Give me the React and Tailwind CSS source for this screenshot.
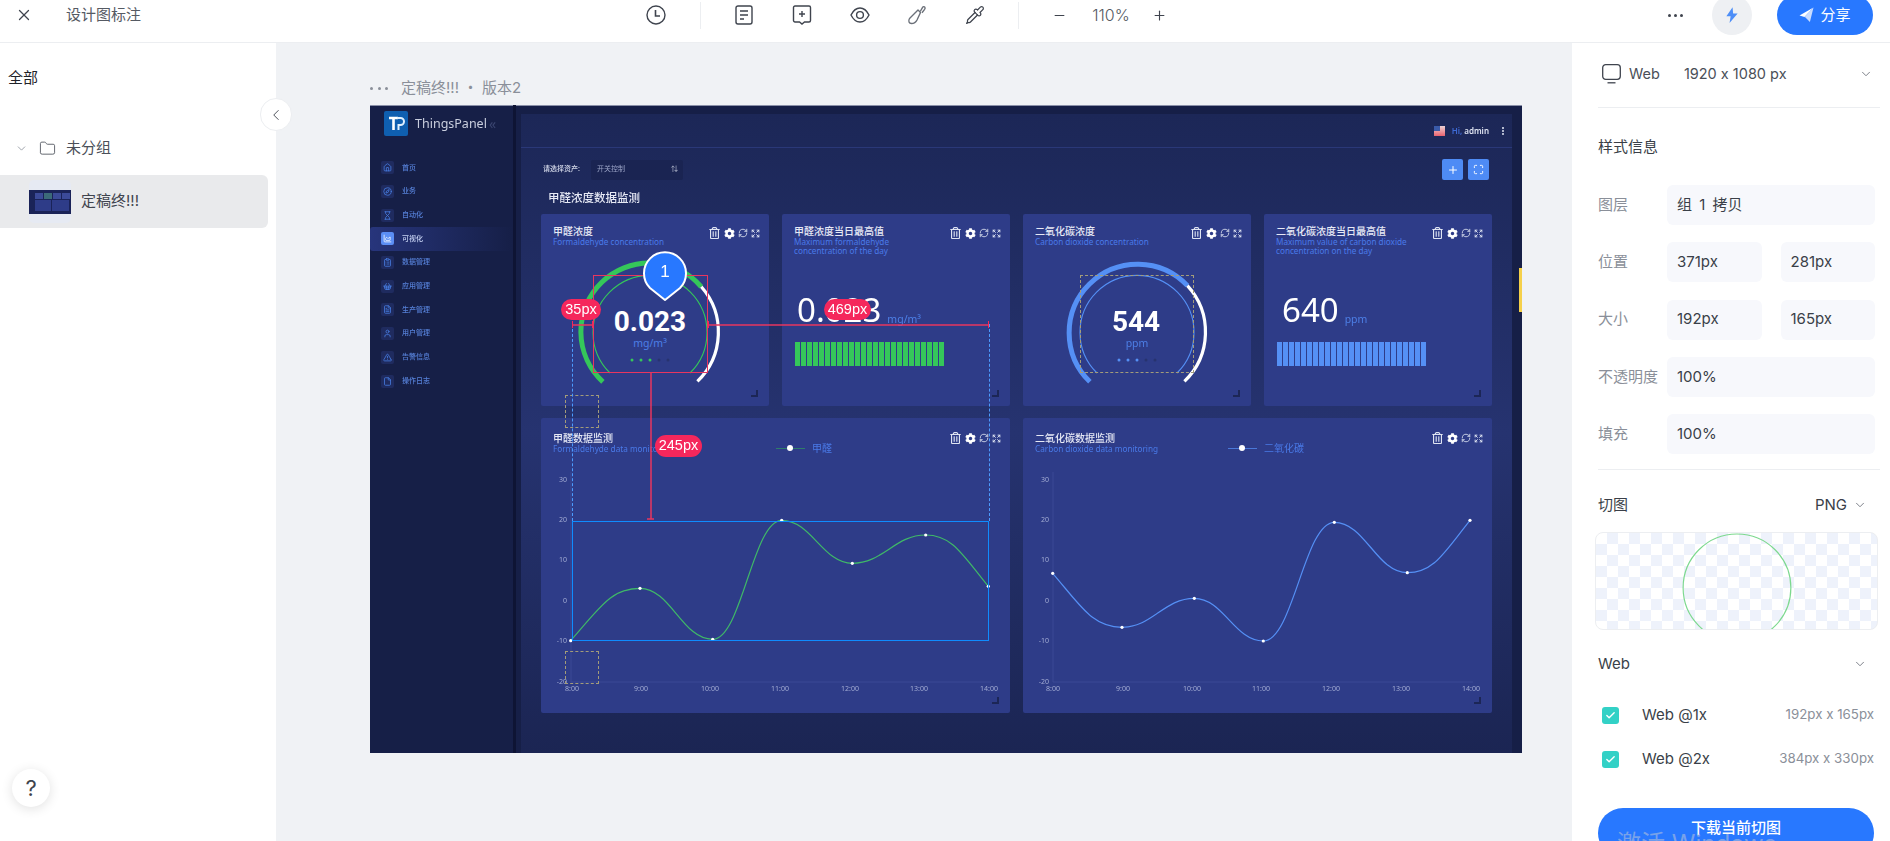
import React from "react";
import {
	ChevronDown,
	ChevronLeft,
	Compass,
	Expand,
	FileText,
	File,
	Folder,
	Hourglass,
	House,
	ClipboardList,
	Minus,
	Pipette,
	Plus,
	Maximize,
	MoreVertical,
	RefreshCw,
	ShoppingBasket,
	TriangleAlert,
	User,
	X,
	ChartArea,
	Check,
} from "lucide-react";
import { FaCog, FaRegTrashAlt } from "react-icons/fa";

const menu = [
	["首页", House],
	["业务", Compass],
	["自动化", Hourglass],
	["可视化", ChartArea],
	["数据管理", ClipboardList],
	["应用管理", ShoppingBasket],
	["生产管理", FileText],
	["用户管理", User],
	["告警信息", TriangleAlert],
	["操作日志", File],
];

const hours = ["8:00", "9:00", "10:00", "11:00", "12:00", "13:00", "14:00"];
const yTicks = [
	["30", 479],
	["20", 519],
	["10", 559],
	["0", 600],
	["-10", 640],
	["-20", 681],
];

// monotone-ish spline: flat at peaks, steeper at both ends
const smoothPath = (pts) => {
	const sec = pts.slice(1).map((p, i) => (p[1] - pts[i][1]) / (p[0] - pts[i][0]));
	const m = pts.map((_, i) => {
		if (i === 0) return sec[0] * 1.5;
		if (i === pts.length - 1) return sec[i - 1] * 1.5;
		if (sec[i - 1] * sec[i] <= 0) return 0;
		return (2 * sec[i - 1] * sec[i]) / (sec[i - 1] + sec[i]);
	});
	let d = `M${pts[0][0]} ${pts[0][1]}`;
	for (let i = 1; i < pts.length; i++) {
		const dx = (pts[i][0] - pts[i - 1][0]) * 0.42;
		d += ` C${pts[i - 1][0] + dx} ${pts[i - 1][1] + m[i - 1] * dx} ${pts[i][0] - dx} ${pts[i][1] - m[i] * dx} ${pts[i][0]} ${pts[i][1]}`;
	}
	return d;
};

const CardTools = () => (
	<div className="flex items-center gap-[3px] text-[#dfe4f2]">
		<FaRegTrashAlt className="h-[12px] w-[11px]" />
		<FaCog className="ml-[1px] h-[11px] w-[11px] text-white" />
		<RefreshCw className="h-[10px] w-[10px]" strokeWidth={2} />
		<Expand className="h-[9px] w-[9px]" strokeWidth={2.5} />
	</div>
);

const Corner = () => (
	<div className="absolute bottom-[9px] right-[11px] h-[7px] w-[7px] border-b-2 border-r-2 border-[#1c2656]" />
);

const CardHead = ({ title, sub }) => (
	<div className="flex justify-between pl-[12px] pr-[9px] pt-[11px]">
		<div>
			<div className="text-[10px] font-medium leading-[12px] text-[#e6e9f5]">{title}</div>
			<div className="w-[140px] whitespace-pre-line text-[8.2px] leading-[9px] text-[#4a7ae8]">{sub}</div>
		</div>
		<div className="pt-[2px]">
			<CardTools />
		</div>
	</div>
);

const Gauge = ({ cx, color, whiteFrom, value, unit, valueX }) => {
	const dots = [0, 1, 2, 3, 4];
	return (
		<svg className="block h-[135px] w-[150px]" viewBox={`${cx - 75} 255 150 135`} fill="none">
			<path d={`M${cx - 47.1} 381.8 A68.5 68.5 0 1 1 ${whiteFrom[0]} ${whiteFrom[1]}`} stroke={color} strokeWidth="5" />
			<path d={`M${whiteFrom[0]} ${whiteFrom[1]} A68.5 68.5 0 0 1 ${cx + 47.4} 381.4`} stroke="#fff" strokeWidth="3.2" />
			<path d={`M${cx - 40} 373 A57 57 0 1 1 ${cx + 40} 373`} stroke={color} strokeWidth="1.1" />
			<text x={valueX} y="331" textAnchor="middle" fill="#fff" fontSize="28" fontWeight="700" fontFamily="Roboto, sans-serif">
				{value}
			</text>
			<text x={cx} y="347" textAnchor="middle" fill="#4d7fe6" fontSize="10.5">
				{unit}
			</text>
			{dots.map((i) => (
				<circle key={i} cx={cx - 18 + i * 9} cy="360" r="1.5" fill={i < 3 ? color : "#27336f"} />
			))}
		</svg>
	);
};

const MaxCard = ({ title, sub, value, unit, color, valueClass }) => (
	<div className="relative h-[192px] rounded-[2px] bg-[#2e3c88]">
		<CardHead title={title} sub={sub} />
		<div className={valueClass}>
			<span className="text-[33px] leading-[34px] text-white">{value}</span>
			<span className="mb-[1px] ml-[6px] text-[10.5px] leading-[14px] text-[#4d7fe6]">{unit}</span>
		</div>
		<div className="ml-[13px] mt-[15px] flex h-[24px] w-[149px] gap-[1.5px]">
			{Array.from({ length: 25 }).map((_, i) => (
				<div key={i} className="flex-1" style={{ background: color }} />
			))}
		</div>
		<Corner />
	</div>
);

const ChartCard = ({ title, sub, legend, legendWidth, color, lineColor, axisX, labels, points }) => (
	<div className="relative h-[295px] rounded-[2px] bg-[#2e3c88]">
		<div className="flex h-[47px] pl-[12px] pr-[9px] pt-[14px]">
			<div style={{ width: legendWidth }}>
				<div className="text-[10px] font-medium leading-[12px] text-[#e6e9f5]">{title}</div>
				<div className="text-[8.2px] leading-[10px] text-[#4a7ae8]">{sub}</div>
			</div>
			<div className="mt-[10px] flex h-[12px] items-center">
				<div className="relative h-[1px] w-[29px]" style={{ background: lineColor }}>
					<div className="absolute left-[11px] top-[-3px] h-[6px] w-[6px] rounded-full bg-white" />
				</div>
				<span className="ml-[7px] text-[10px] leading-[12px] text-[#4a7ae8]">{legend}</span>
			</div>
			<div className="ml-auto">
				<CardTools />
			</div>
		</div>
		<svg className="block h-[235px] w-full" viewBox={`${axisX - 30} 465 469 235`} fill="none">
			<path d={`M${axisX} 472 V682 H${axisX + 420}`} stroke="#3a4995" strokeWidth="1" />
			{yTicks.map(([t, y]) => (
				<text key={t} x={axisX - 4} y={y + 3} textAnchor="end" fill="#a3acd4" fontSize="7">
					{t}
				</text>
			))}
			{hours.map((h, i) => (
				<text key={h} x={labels[i]} y="691" textAnchor="middle" fill="#a3acd4" fontSize="7">
					{h}
				</text>
			))}
			<path d={smoothPath(points)} stroke={color} strokeWidth="1.2" />
			{points.map((p) => (
				<circle key={p[0]} cx={p[0]} cy={p[1]} r="1.6" fill="#fff" />
			))}
		</svg>
		<Corner />
	</div>
);

const Artboard = () => (
	<div className="relative h-[648px] w-[1152px] shrink-0 bg-[#161f47] shadow-[inset_0_1px_0_#8a90a8] [font-family:'Noto_Sans','Noto_Sans_CJK_SC',sans-serif]">
		<div className="flex h-full blur-[0.4px]">
			<aside className="w-[143px] shrink-0">
				<div className="flex items-center pl-[14px] pt-[6px]">
					<svg className="h-[25px] w-[24px] shrink-0" viewBox="0 0 24 25" fill="none">
						<rect width="24" height="25" rx="2" fill="#0f5fb0" />
						<path d="M5 7h9M9.5 7v12" stroke="#fff" strokeWidth="2.6" />
						<path d="M13 7h3.5a3.5 3.5 0 0 1 0 7H14.5v5" stroke="#dff0ff" strokeWidth="2" />
					</svg>
					<span className="ml-[7px] text-[12.5px] leading-[25px] text-[#c9cede]">ThingsPanel</span>
					<span className="ml-[2px] text-[14px] leading-[25px] text-[#3a4570]">«</span>
				</div>
				<div className="mt-[20px] flex flex-col">
					{menu.map(([label, Icon]) => {
						const active = label === "可视化";
						return (
							<div
								key={label}
								className={
									active
										? "flex h-[23.7px] items-center rounded-l-[3px] bg-linear-to-r from-[#27357c] to-[#161f47] pl-[11px]"
										: "flex h-[23.7px] items-center pl-[11px]"
								}
							>
								<div
									className={
										active
											? "flex h-[13px] w-[13px] items-center justify-center rounded-[2px] bg-[#5b8ef5] text-white"
											: "flex h-[13px] w-[13px] items-center justify-center rounded-[2px] bg-[#1f2b5f] text-[#4a82e8]"
									}
								>
									<Icon className="h-[9px] w-[9px]" strokeWidth={2} />
								</div>
								<span className={active ? "ml-[8px] text-[7px] font-medium text-[#c6d2f2]" : "ml-[8px] text-[7px] font-medium text-[#5680d8]"}>
									{label}
								</span>
							</div>
						);
					})}
				</div>
			</aside>
			<div className="w-[3px] shrink-0 bg-[#0e1434]" />
			<main className="ml-[5px] mt-[9px] h-[639px] w-[991px] shrink-0 bg-linear-to-b from-[#1c2757] via-[#263370] to-[#1b2553]">
				<header className="flex h-[34px] items-center justify-end border-b border-[#2a3878] pr-[4px]">
					<div className="relative h-[10px] w-[11px] bg-linear-to-b from-[#e8d0d4] to-[#e86070]">
						<div className="absolute left-0 top-0 h-[5px] w-[6px] bg-[#3a5aa8]" />
					</div>
					<span className="ml-[7px] text-[8px] font-semibold text-[#3f6bd6]">Hi,</span>
					<span className="ml-[2px] text-[8px] font-semibold text-[#dfe4f2]">admin</span>
					<MoreVertical className="ml-[9px] h-[10px] w-[10px] text-[#dfe4f2]" strokeWidth={3} />
				</header>
				<div className="pl-[20px] pr-[20px]">
					<div className="mt-[11px] flex h-[21px] items-center">
						<span className="ml-[2px] text-[7px] font-medium text-[#d5daea]">请选择资产:</span>
						<div className="ml-[11px] flex h-[20px] w-[92px] items-center justify-between rounded-[2px] bg-[#1a2452] pl-[6px] pr-[5px] text-[7px] text-[#9aa3c6]">
							<span>开关控制</span>
							<span className="text-[#c9cede]">⇅</span>
						</div>
						<div className="ml-auto mr-[3px] flex gap-[5px]">
							<div className="flex h-[21px] w-[21px] items-center justify-center rounded-[2px] bg-[#4e8bf5] text-white">
								<Plus className="h-[12px] w-[12px]" strokeWidth={2} />
							</div>
							<div className="flex h-[21px] w-[21px] items-center justify-center rounded-[2px] bg-[#4e8bf5] text-white">
								<Maximize className="h-[11px] w-[11px]" strokeWidth={2} />
							</div>
						</div>
					</div>
					<div className="ml-[7px] mt-[9px] h-[18px] text-[11.5px] font-medium leading-[18px] text-[#e6e9f5]">甲醛浓度数据监测</div>
					<div className="mt-[7px] grid grid-cols-4 gap-x-[13px]">
						<div className="relative h-[192px] rounded-[2px] bg-[#2e3c88]">
							<CardHead title="甲醛浓度" sub="Formaldehyde concentration" />
							<div className="absolute left-[34px] top-[41px]">
								<Gauge cx={650} color="#35c75a" whiteFrom={[701.3, 286.8]} value="0.023" unit="mg/m³" valueX={650} />
							</div>
							<Corner />
						</div>
						<MaxCard
							title="甲醛浓度当日最高值"
							sub={"Maximum formaldehyde\nconcentration of the day"}
							value="0.023"
							unit="mg/m³"
							color="#35c75a"
							valueClass="ml-[15px] mt-[38px] flex h-[34px] items-end"
						/>
						<div className="relative h-[192px] rounded-[2px] bg-[#2e3c88]">
							<CardHead title="二氧化碳浓度" sub="Carbon dioxide concentration" />
							<div className="absolute left-[39px] top-[41px]">
								<Gauge cx={1136} color="#5590f5" whiteFrom={[1186.4, 285.6]} value="544" unit="ppm" valueX={1135} />
							</div>
							<Corner />
						</div>
						<MaxCard
							title="二氧化碳浓度当日最高值"
							sub={"Maximum value of carbon dioxide\nconcentration on the day"}
							value="640"
							unit="ppm"
							color="#5590f5"
							valueClass="ml-[18px] mt-[38px] flex h-[34px] items-end"
						/>
					</div>
					<div className="mt-[12px] grid grid-cols-2 gap-x-[13px]">
						<ChartCard
							title="甲醛数据监测"
							sub="Formaldehyde data monitoring"
							legend="甲醛"
							legendWidth="223px"
							color="#3fb868"
							lineColor="#2f7d6a"
							axisX={571}
							labels={[572, 641, 710, 780, 850, 919, 989]}
							points={[[570.7, 640.7], [640, 588.3], [712.7, 639.3], [781.7, 520.3], [852.3, 563.3], [925.7, 535], [988.3, 586.3]]}
						/>
						<ChartCard
							title="二氧化碳数据监测"
							sub="Carbon dioxide data monitoring"
							legend="二氧化碳"
							legendWidth="193px"
							color="#5590f5"
							lineColor="#4a78d8"
							axisX={1053}
							labels={[1053, 1123, 1192, 1261, 1331, 1401, 1471]}
							points={[[1052.7, 573.3], [1122, 627.3], [1194.3, 598.3], [1263.3, 641], [1334.3, 522.3], [1407.3, 572.7], [1470, 520.3]]}
						/>
					</div>
				</div>
			</main>
		</div>

		{/* annotation layer on top of the design image */}
		<div className="absolute left-[1149px] top-[163px] h-[44px] w-[3px] bg-[#f5d04a]" />
		<div className="absolute left-[710px] top-[170px] h-[98px] w-[114px] border border-dashed border-[#a39c7a]" />
		<div className="absolute left-[195px] top-[290px] h-[33px] w-[34px] border border-dashed border-[#a39c7a]" />
		<div className="absolute left-[195px] top-[546px] h-[33px] w-[34px] border border-dashed border-[#a39c7a]" />
		<div className="absolute left-[202px] top-[219px] h-[197px] border-l border-dashed border-[#4c9cff]" />
		<div className="absolute left-[619px] top-[219px] h-[197px] border-l border-dashed border-[#4c9cff]" />
		<div className="absolute left-[202px] top-[416px] h-[120px] w-[417px] border-[1.5px] border-[#0f8cff]" />
		<div className="absolute left-[223px] top-[170px] h-[98px] w-[115px] border border-[#e8355f]" />
		<div className="absolute left-[202px] top-[216px] h-[7px] w-[21px] border-x border-[#f5275c]">
			<div className="mt-[3px] h-[2px] bg-[#e8355f]/75" />
		</div>
		<div className="absolute left-[338px] top-[216px] h-[7px] w-[281px] border-x border-[#f5275c]">
			<div className="mt-[3px] h-[2px] bg-[#e8355f]/75" />
		</div>
		<div className="absolute left-[280px] top-[268px] h-[146px] w-[2px] bg-[#e8355f]/75" />
		<div className="absolute left-[277px] top-[413px] h-[2px] w-[7px] bg-[#e8355f]/75" />
		<div className="absolute left-[191px] top-[194px] flex h-[21px] w-[40px] items-center justify-center rounded-full bg-[#f5275c] text-[14.5px] text-white [font-family:'Liberation_Sans',sans-serif]">
			35px
		</div>
		<div className="absolute left-[454px] top-[194px] flex h-[21px] w-[47px] items-center justify-center rounded-full bg-[#f5275c] text-[14.5px] text-white [font-family:'Liberation_Sans',sans-serif]">
			469px
		</div>
		<div className="absolute left-[285px] top-[330px] flex h-[22px] w-[47px] items-center justify-center rounded-full bg-[#f5275c] text-[14.5px] text-white [font-family:'Liberation_Sans',sans-serif]">
			245px
		</div>
		<div className="absolute left-[272px] top-[145px] h-[52px] w-[46px]">
			<svg className="h-[52px] w-[46px]" viewBox="0 0 46 52">
				<path d="M23 50 L8 38 A21 21 0 1 1 38 38 Z" fill="#2878ff" stroke="#fff" strokeWidth="2" strokeLinejoin="round" />
			</svg>
			<div className="absolute inset-x-0 top-[11px] text-center text-[17px] leading-[22px] text-white [font-family:'Liberation_Sans',sans-serif]">1</div>
		</div>
	</div>
);

const TopBar = () => (
	<div className="relative z-10 h-[43px] shrink-0 border-b border-[#eceef1] bg-white">
		<div className="flex h-[30px] items-center text-[#3f444e]">
			<X className="ml-[15px] h-[18px] w-[18px] shrink-0" strokeWidth={1.7} />
			<span className="ml-[33px] w-[77px] shrink-0 text-[15px] text-[#555a63]">设计图标注</span>
			{/* clock */}
			<svg className="ml-[503px] h-[20px] w-[20px] shrink-0" viewBox="0 0 20 20" fill="none" stroke="currentColor" strokeWidth="1.4">
				<circle cx="10" cy="10" r="9" />
				<path d="M9.5 5v6h4.5" strokeWidth="1.6" />
			</svg>
			<div className="ml-[34px] h-[27px] w-px shrink-0 bg-[#eceef1]" />
			{/* doc */}
			<svg className="ml-[33px] h-[20px] w-[20px] shrink-0" viewBox="0 0 20 20" fill="none" stroke="currentColor" strokeWidth="1.4">
				<rect x="2" y="1" width="16" height="18" rx="2" />
				<path d="M6 6h8M6 10h8M6 14h4" />
			</svg>
			{/* add comment */}
			<svg className="ml-[38px] h-[20px] w-[20px] shrink-0" viewBox="0 0 20 20" fill="none" stroke="currentColor" strokeWidth="1.4">
				<path d="M3 1h14a1.5 1.5 0 0 1 1.5 1.5v13a1.5 1.5 0 0 1-1.5 1.5h-4.5l-2.5 2-2.5-2H3a1.5 1.5 0 0 1-1.5-1.5v-13A1.5 1.5 0 0 1 3 1z" />
				<path d="M10 6v6M7 9h6" />
			</svg>
			{/* eye */}
			<svg className="ml-[38px] h-[20px] w-[20px] shrink-0" viewBox="0 0 20 20" fill="none" stroke="currentColor" strokeWidth="1.4">
				<path d="M1 10c2-4 5-7 9-7s7 3 9 7c-2 4-5 7-9 7s-7-3-9-7z" />
				<circle cx="10" cy="10" r="3.4" />
			</svg>
			{/* knife */}
			<svg className="ml-[37px] h-[20px] w-[20px] shrink-0" viewBox="0 0 20 20" fill="none" stroke="#6b7079" strokeWidth="1.4" strokeLinejoin="round">
				<path d="M13.5 7.5l-2.5-2.5L2.5 13.5c-1.5 2.5-.5 5 2 5 2.5 0 4.5-1.5 5.5-3.5l3.5-7.5z" />
				<path d="M13.2 6.5l2.4-4.2c.5-.9 1.7-.9 2.2-.2.5.7.3 1.6-.2 2.3L15 7.8" />
			</svg>
			<Pipette className="ml-[38px] h-[20px] w-[20px] shrink-0" strokeWidth={1.5} />
			<div className="ml-[33px] h-[27px] w-px shrink-0 bg-[#eceef1]" />
			<Minus className="ml-[33px] h-[15px] w-[15px] shrink-0" strokeWidth={1.8} />
			<span className="ml-[21px] w-[46px] shrink-0 text-center text-[16px] font-light text-[#555a63]">110%</span>
			<Plus className="ml-[18px] h-[15px] w-[15px] shrink-0" strokeWidth={1.8} />
			<div className="ml-[498px] flex w-[20px] shrink-0 justify-center gap-[3px]">
				<span className="h-[3px] w-[3px] rounded-full bg-[#3f444e]" />
				<span className="h-[3px] w-[3px] rounded-full bg-[#3f444e]" />
				<span className="h-[3px] w-[3px] rounded-full bg-[#3f444e]" />
			</div>
			<div className="ml-[27px] flex h-[40px] w-[40px] shrink-0 items-center justify-center rounded-full bg-[#eef0f3]">
				<svg className="h-[18px] w-[18px]" viewBox="0 0 16 16">
					<path d="M8.5 1L3 9h3.8L5.8 15 13 6.6H9z" fill="#4d8ef7" />
				</svg>
			</div>
			<div className="ml-[25px] flex h-[40px] w-[96px] shrink-0 items-center justify-center rounded-full bg-[#2878ff] text-[15px] text-white">
				<svg className="mr-[6px] h-[16px] w-[15px]" viewBox="0 0 15 16">
					<path d="M14.5 0.5L0.5 8.5l5 1.6z" fill="#fff" />
					<path d="M14.5 0.5L5.5 10.1l1 0.3 4.4 4.6z" fill="#c9dcff" />
				</svg>
				分享
			</div>
		</div>
	</div>
);

const LeftPanel = () => (
	<aside className="relative w-[276px] shrink-0 bg-white text-[15px]">
		<div className="pl-[8px] pt-[24px] leading-[22px] text-[#1f2329]">全部</div>
		<div className="mt-[48px] flex h-[22px] items-center pl-[15px] text-[#4a4f58]">
			<ChevronDown className="h-[13px] w-[13px] text-[#8a8f99]" strokeWidth={1.5} />
			<Folder className="ml-[11px] h-[17px] w-[17px]" strokeWidth={1.2} />
			<span className="ml-[10px]">未分组</span>
		</div>
		<div className="mt-[16px] flex h-[53px] w-[268px] items-center rounded-r-[6px] bg-[#e9eaec] pl-[29px]">
			<div className="flex h-[43px] w-[42px] items-center rounded-[5px] bg-[#e6eaf3]">
				<div className="h-[24px] w-full bg-[#1a2358] pl-[6px] pt-[3px]">
					<div className="flex gap-[1px]">
						<div className="h-[6px] w-[8px] bg-[#3b4a98]" />
						<div className="h-[6px] w-[8px] bg-[#3b6a78]" />
						<div className="h-[6px] w-[8px] bg-[#3b4a98]" />
						<div className="h-[6px] w-[8px] bg-[#3b4a98]" />
					</div>
					<div className="mt-[1px] flex gap-[1px]">
						<div className="h-[11px] w-[16px] bg-[#2e3c88]" />
						<div className="h-[11px] w-[17px] bg-[#2e3c88]" />
					</div>
				</div>
			</div>
			<span className="ml-[10px] text-[#3f444e]">定稿终!!!</span>
		</div>
		<div className="absolute bottom-[34px] left-[12px] flex h-[38px] w-[38px] items-center justify-center rounded-full bg-white text-[22px] text-[#3f444e] shadow-[0_2px_12px_rgba(0,0,0,0.12)]">
			?
		</div>
		<div className="absolute right-[-16px] top-[55px] z-10 flex h-[33px] w-[32px] items-center justify-center rounded-full border border-[#eceef1] bg-white text-[#4a4f58]">
			<ChevronLeft className="h-[18px] w-[18px]" strokeWidth={1.3} />
		</div>
	</aside>
);

const Field = ({ children }) => (
	<div className="flex h-[40px] flex-1 items-center rounded-[6px] bg-[#f7f8fc] pl-[10px] text-[#3a3f48] [word-spacing:3px]">{children}</div>
);

const Row = ({ label, children }) => (
	<div className="flex items-center">
		<span className="w-[69px] shrink-0 whitespace-nowrap text-[#8a8f99]">{label}</span>
		<div className="flex flex-1 gap-[19px]">{children}</div>
	</div>
);

const ExportRow = ({ label, size }) => (
	<div className="flex h-[22px] items-center pl-[4px]">
		<div className="flex h-[17px] w-[17px] items-center justify-center rounded-[3px] bg-[#33d1c6] text-white">
			<Check className="h-[11px] w-[11px]" strokeWidth={3} />
		</div>
		<span className="ml-[23px] text-[#3a3f48]">{label}</span>
		<span className="ml-auto mr-[6px] text-[13.3px] text-[#8a8f99]">{size}</span>
	</div>
);

const RightPanel = () => (
	<aside className="w-[318px] shrink-0 bg-white pl-[26px] pr-[10px] text-[15px]">
		<div className="mt-[21px] flex h-[20px] items-center pl-[4px]">
			<svg className="h-[20px] w-[19px] text-[#3f444e]" viewBox="0 0 19 20" fill="none" stroke="currentColor" strokeWidth="1.3">
				<rect x="0.7" y="0.7" width="17.6" height="14.6" rx="3" />
				<path d="M5.5 18.8h8" />
			</svg>
			<span className="ml-[8px] text-[14.5px] text-[#4a4f58]">Web</span>
			<span className="ml-[24px] text-[14.5px] text-[#4a4f58]">1920 x 1080 px</span>
			<ChevronDown className="ml-auto mr-[7px] h-[14px] w-[14px] text-[#6b7079]" strokeWidth={1.5} />
		</div>
		<div className="mt-[23px] h-px bg-[#eceef1]" />
		<div className="mt-[28px] leading-[22px] text-[#3a3f48]">样式信息</div>
		<div className="mr-[5px] mt-[27px] flex flex-col gap-[17.25px]">
			<Row label="图层">
				<Field>组 1 拷贝</Field>
			</Row>
			<Row label="位置">
				<Field>371px</Field>
				<Field>281px</Field>
			</Row>
			<Row label="大小">
				<Field>192px</Field>
				<Field>165px</Field>
			</Row>
			<Row label="不透明度">
				<Field>100%</Field>
			</Row>
			<Row label="填充">
				<Field>100%</Field>
			</Row>
		</div>
		<div className="mt-[15px] h-px bg-[#eceef1]" />
		<div className="mt-[24px] flex h-[22px] items-center text-[#3a3f48]">
			<span>切图</span>
			<span className="ml-auto">PNG</span>
			<ChevronDown className="ml-[6px] mr-[13px] h-[14px] w-[14px] text-[#6b7079]" strokeWidth={1.5} />
		</div>
		<div className="-ml-[3px] mt-[16px] h-[98px] w-[283px] overflow-hidden rounded-[8px] border border-[#eceef1] bg-[conic-gradient(#eef2fb_25%,#fff_0_50%,#eef2fb_0_75%,#fff_0)] bg-[length:22px_22px]">
			<svg className="h-full w-full" viewBox="0 0 283 98" fill="none">
				<circle cx="142" cy="56" r="55" stroke="#7dd98f" strokeWidth="1.2" />
			</svg>
		</div>
		<div className="mt-[23px] flex h-[22px] items-center text-[#3a3f48]">
			<span>Web</span>
			<ChevronDown className="ml-auto mr-[13px] h-[14px] w-[14px] text-[#6b7079]" strokeWidth={1.5} />
		</div>
		<div className="mt-[29px] flex flex-col gap-[22px]">
			<ExportRow label="Web @1x" size="192px x 165px" />
			<ExportRow label="Web @2x" size="384px x 330px" />
		</div>
		<div className="relative mt-[38px] flex h-[50px] w-[276px] justify-center rounded-full bg-[#2878ff] pt-[9px] font-medium text-white">
			下载当前切图
		</div>
	</aside>
);

export default function App() {
	return (
		<div className="relative flex h-[841px] w-[1890px] flex-col overflow-hidden bg-[#f0f2f5] [font-family:'Inter','Noto_Sans_CJK_SC',sans-serif] [font-feature-settings:'calt'_0]">
			<TopBar />
			<div className="flex min-h-0 flex-1">
				<LeftPanel />
				<div className="min-w-0 flex-1 pl-[94px] pt-[34px]">
					<div className="flex h-[22px] items-center text-[15px] text-[#8a8f99]">
						<div className="flex w-[18px] justify-between">
							<span className="h-[3px] w-[3px] rounded-full bg-[#8a8f99]" />
							<span className="h-[3px] w-[3px] rounded-full bg-[#8a8f99]" />
							<span className="h-[3px] w-[3px] rounded-full bg-[#8a8f99]" />
						</div>
						<span className="ml-[13px]">定稿终!!!</span>
						<span className="mx-[4px]">・</span>
						<span>版本2</span>
					</div>
					<div className="mt-[6px]">
						<Artboard />
					</div>
				</div>
				<RightPanel />
			</div>
			<div className="absolute left-[1617px] top-[829px] text-[24px] leading-[30px] text-[#c8ccd4]/50">激活 Windows</div>
		</div>
	);
}
